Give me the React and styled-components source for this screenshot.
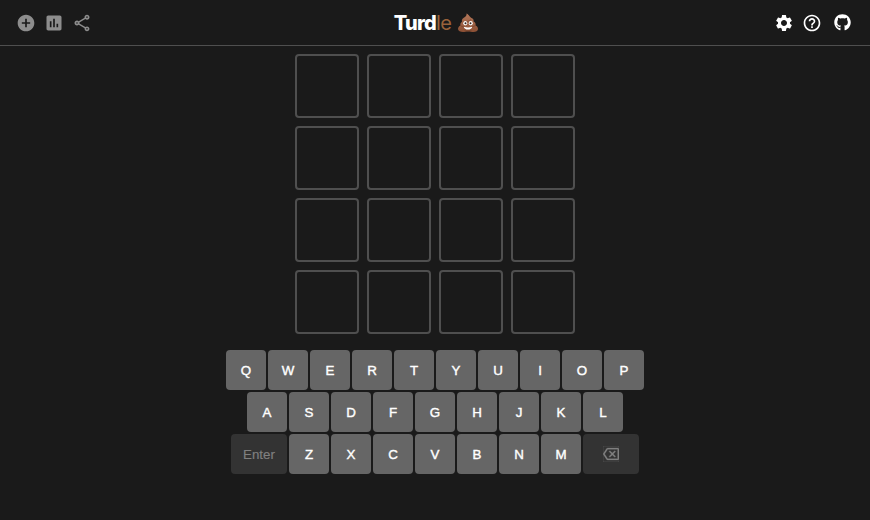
import React from "react";
import styled, { createGlobalStyle } from "styled-components";
import { MdAddCircle, MdAssessment, MdOutlineShare, MdSettings, MdHelpOutline, MdOutlineBackspace } from "react-icons/md";
import { FaGithub } from "react-icons/fa";

const GlobalStyle = createGlobalStyle`
  * { box-sizing: border-box; }
  body { margin: 0; background: #1a1a1a; color: #fff; font-family: "Liberation Sans", Arial, sans-serif; overflow: hidden; }
`;

const Page = styled.div`
  height: 520px;
  display: flex;
  flex-direction: column;
  align-items: center;
`;

const Header = styled.header`
  width: 100%;
  height: 46px;
  padding: 0 18px 0 16px;
  display: grid;
  grid-template-columns: 1fr auto 1fr;
  align-items: center;
  border-bottom: 1px solid #4f4f4f;
`;

const IconGroup = styled.nav`
  display: flex;
  align-items: center;
  gap: 8px;
  justify-content: ${(p) => (p.$end ? "flex-end" : "flex-start")};
`;

const IconButton = styled.button`
  display: flex;
  align-items: center;
  justify-content: center;
  width: 20px;
  height: 20px;
  padding: 0;
  border: 0;
  background: none;
  color: ${(p) => (p.$muted ? "#8d8d8d" : "#fff")};
  margin-left: ${(p) => p.$offset || 0}px;
`;

const Title = styled.h1`
  display: flex;
  align-items: center;
  margin: 0;
  padding-left: 4px;
  font: 800 20px/28px Inter, sans-serif;
  letter-spacing: -0.8px;
`;

const TitleTail = styled.span`
  color: #99623a;
  font-weight: 400;
  letter-spacing: -0.6px;
`;

const PoopIcon = styled.svg`
  width: 20px;
  height: 20px;
  margin-left: 7px;
`;

const Board = styled.main`
  display: grid;
  grid-template-columns: repeat(4, 64px);
  grid-auto-rows: 64px;
  gap: 8px;
  margin-top: 8px;
`;

const Tile = styled.div`
  border: 2px solid #4f4f4f;
  border-radius: 4px;
`;

const Keyboard = styled.section`
  display: flex;
  flex-direction: column;
  align-items: center;
  gap: 2px;
  margin-top: 16px;
`;

const KeyRow = styled.div`
  display: flex;
  gap: 2px;
`;

const Key = styled.button`
  display: flex;
  align-items: center;
  justify-content: center;
  width: ${(p) => (p.$wide ? 56 : 40)}px;
  height: 40px;
  padding: 0;
  border: 0;
  border-radius: 4px;
  background: ${(p) => (p.$wide ? "#333" : "#666")};
  color: ${(p) => (p.$wide ? "#808080" : "#fff")};
  font: 400 13.333px "Liberation Sans", Arial, sans-serif;
  -webkit-text-stroke: ${(p) => (p.$wide ? "0.15px #808080" : "0.4px #fff")};
`;

const letters = (row) => row.split("").map((c) => <Key key={c}>{c}</Key>);

function Poop() {
  return (
    <PoopIcon viewBox="0 0 40 40" aria-label="poop">
      <defs>
        <linearGradient id="brown" x1="0" y1="0" x2="0" y2="1">
          <stop offset="0" stopColor="#b5785a" />
          <stop offset="1" stopColor="#8b4f34" />
        </linearGradient>
      </defs>
      <path fill="url(#brown)" d="M17 1c1 5-3 7-6 9-3 2-4 5-3 8-3 1-4 4-3 7-3 1-5 4-5 7 0 4 5 6 10 6 4 0 6-1 10-1s7 1 11 1c5 0 9-2 9-6 0-4-2-6-5-7 1-4-1-7-4-8 1-4-1-6-4-7C23 8 23 4 17 1z" />
      <path fill="none" stroke="#70402a" strokeWidth="1.200" d="M10 17c6 1 12 0 16-4M6 26c3 2 5 1 7 1M34 25c-2 2-4 2-6 2M13 35.500c5 1 10 0 14 0" />
      <ellipse cx="14.500" cy="20.500" rx="4" ry="4.300" fill="#fff" />
      <ellipse cx="25.500" cy="20.500" rx="4" ry="4.300" fill="#fff" />
      <circle cx="15" cy="20.500" r="2" fill="#31211b" />
      <circle cx="25" cy="20.500" r="2" fill="#31211b" />
      <path fill="#fff" d="M11.500 27.500q8.500 2.500 17 0c-1 7.500-16 7.500-17 0z" />
    </PoopIcon>
  );
}

export default function App() {
  return (
    <Page>
      <GlobalStyle />
      <Header>
        <IconGroup>
          <IconButton $muted aria-label="New game"><MdAddCircle size={20} /></IconButton>
          <IconButton $muted aria-label="Statistics"><MdAssessment size={20} /></IconButton>
          <IconButton $muted aria-label="Share"><MdOutlineShare size={20} /></IconButton>
        </IconGroup>
        <Title>Turd<TitleTail>le</TitleTail><Poop /></Title>
        <IconGroup $end>
          <IconButton aria-label="Settings"><MdSettings size={20} /></IconButton>
          <IconButton aria-label="Help"><MdHelpOutline size={20} /></IconButton>
          <IconButton $offset={2} aria-label="GitHub"><FaGithub size={17} /></IconButton>
        </IconGroup>
      </Header>
      <Board>
        {Array.from({ length: 16 }, (_, i) => <Tile key={i} />)}
      </Board>
      <Keyboard>
        <KeyRow>{letters("QWERTYUIOP")}</KeyRow>
        <KeyRow>{letters("ASDFGHJKL")}</KeyRow>
        <KeyRow>
          <Key $wide>Enter</Key>
          {letters("ZXCVBNM")}
          <Key $wide aria-label="Backspace"><MdOutlineBackspace size={16} stroke="currentColor" strokeWidth={0.4} /></Key>
        </KeyRow>
      </Keyboard>
    </Page>
  );
}
